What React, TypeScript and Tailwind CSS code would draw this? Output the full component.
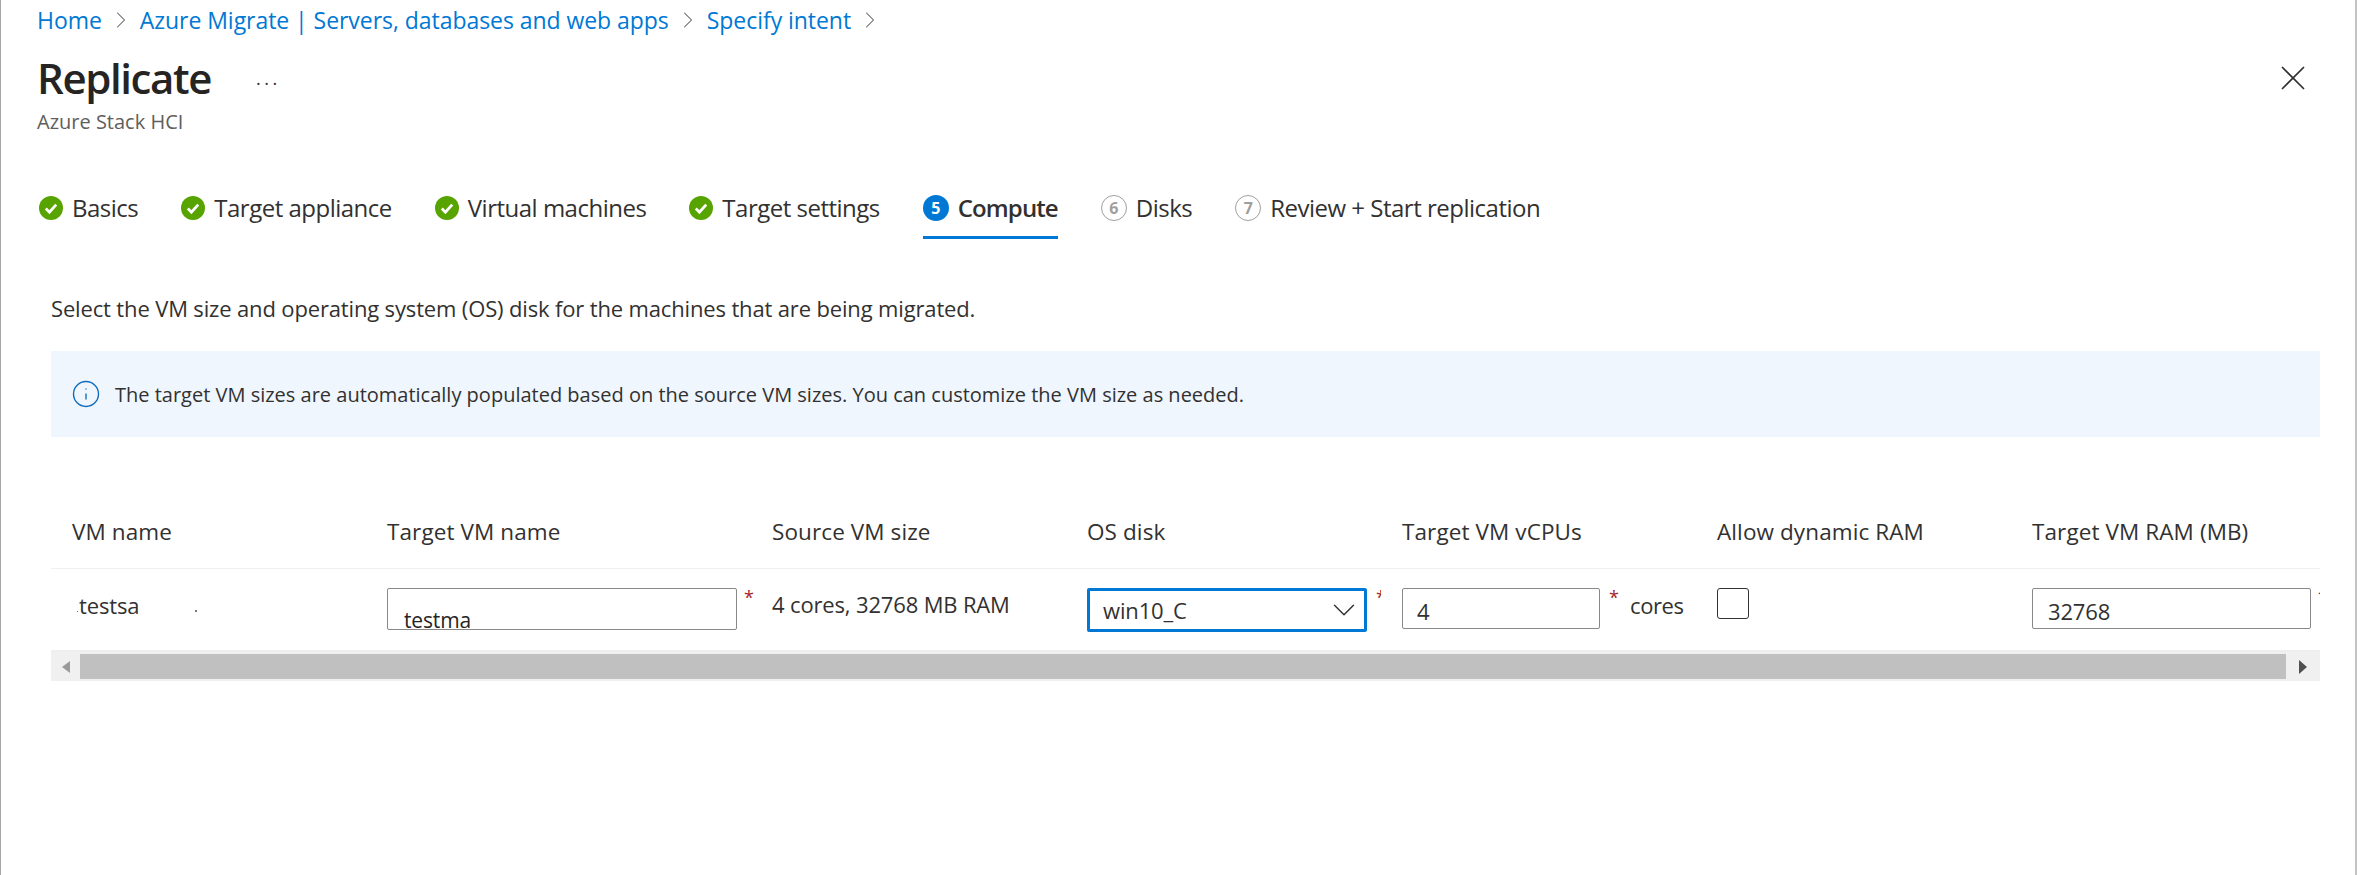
import { ChevronDown, ChevronRight, Info, X } from 'lucide-react';

type Step = {
  label: string;
  state: 'done' | 'active' | 'todo';
  num?: number;
};

const steps: Step[] = [
  { label: 'Basics', state: 'done' },
  { label: 'Target appliance', state: 'done' },
  { label: 'Virtual machines', state: 'done' },
  { label: 'Target settings', state: 'done' },
  { label: 'Compute', state: 'active', num: 5 },
  { label: 'Disks', state: 'todo', num: 6 },
  { label: 'Review + Start replication', state: 'todo', num: 7 },
];

const crumbs = ['Home', 'Azure Migrate | Servers, databases and web apps', 'Specify intent'];

const columns = ['VM name', 'Target VM name', 'Source VM size', 'OS disk', 'Target VM vCPUs', 'Allow dynamic RAM', 'Target VM RAM (MB)'];

function StepIcon({ step }: { step: Step }) {
  if (step.state === 'done') {
    return (
      <svg className="h-6 w-6 shrink-0" viewBox="0 0 24 24">
        <circle cx="12" cy="12" r="12" fill="#57a300" />
        <path d="M6.8 12.6l3.6 3.6 6.8-7.6" fill="none" stroke="#fff" strokeWidth="2.8" />
      </svg>
    );
  }

  if (step.state === 'active') {
    return (
      <span className="flex h-[26px] w-[26px] shrink-0 items-center justify-center rounded-full bg-[#0078d4] text-[16px] font-bold text-white">
        {step.num}
      </span>
    );
  }

  return (
    <span className="flex h-[26px] w-[26px] shrink-0 items-center justify-center rounded-full border border-[#a19f9d] text-[16px] font-bold text-[#a19f9d]">
      {step.num}
    </span>
  );
}

function Required() {
  return <span className="ml-[7px] w-[12px] text-[18px] leading-[18px] text-[#a4262c]">*</span>;
}

export default function App() {
  return (
    <div className="box-border h-[875px] w-[2357px] overflow-hidden border-r-2 border-l border-r-[#c4c4c4] border-l-[#a6a6a6] bg-white font-['Open_Sans',sans-serif] text-[#323130]">
      <nav className="flex h-[40px] items-center pl-[36px] text-[23px] tracking-[-0.05px] text-[#0078d4]">
        {crumbs.map((crumb) => (
          <span className="flex items-center" key={crumb}>
            <span>{crumb}</span>
            <ChevronRight className="mx-[5px] text-[#605e5c]" size={28} strokeWidth={0.9} />
          </span>
        ))}
      </nav>

      <div className="mt-[10px] flex h-[56px] items-center justify-between pl-[36px] pr-[41px]">
        <div className="flex items-center">
          <h1 className="text-[42px] font-semibold leading-[56px] tracking-[-1.4px] text-[#252423]">Replicate</h1>
          <span className="ml-[45px] text-[18px] leading-none tracking-[3.5px] text-[#323130]">...</span>
        </div>
        <X className="text-[#323130]" size={42} strokeWidth={1} />
      </div>

      <p className="mt-[2px] h-[28px] pl-[36px] text-[20px] leading-[28px] text-[#605e5c]">Azure Stack HCI</p>

      <div className="mt-[54px] flex items-start gap-[43px] pl-[38px]">
        {steps.map((step) => (
          <div
            className={`flex h-[49px] items-start gap-[9px] border-b-[3px] ${step.state === 'active' ? 'border-[#0078d4]' : 'border-transparent'}`}
            key={step.label}
          >
            <div className="flex h-[36px] items-center gap-[9px]">
              <StepIcon step={step} />
              <span className={`text-[24px] ${step.state === 'active' ? 'font-semibold tracking-[-0.9px]' : 'tracking-[-0.5px]'}`}>{step.label}</span>
            </div>
          </div>
        ))}
      </div>

      <div className="pl-[50px]">
        <p className="mt-[55px] h-[28px] text-[22px] leading-[28px] tracking-[-0.15px]">
          Select the VM size and operating system (OS) disk for the machines that are being migrated.
        </p>

        <div className="mt-[29px] flex h-[86px] w-[2269px] items-center gap-[14px] bg-[#eff6fe] pl-[20px]">
          <Info className="text-[#0f6cbd]" size={30} strokeWidth={1.1} />
          <span className="pt-[2px] text-[20px]">
            The target VM sizes are automatically populated based on the source VM sizes. You can customize the VM size as needed.
          </span>
        </div>

        <div className="mt-[59px] w-[2269px] overflow-hidden">
          <div className="grid h-[73px] grid-cols-[315px_385px_315px_315px_315px_315px_400px] items-center border-b border-[#f0f0f0] pl-[21px] pr-0">
            {columns.map((col) => (
              <span className="whitespace-nowrap text-[22.5px] font-medium tracking-[0.1px] text-[#323130]" key={col}>{col}</span>
            ))}
          </div>

          <div className="grid h-[83px] grid-cols-[315px_385px_315px_315px_315px_315px_400px] items-start border-b-2 border-[#eeeeee] pl-[21px] pt-[19px] text-[22px] tracking-[-0.15px]">
            <div className="flex h-[34px] items-center pl-[5px]">
              <span className="mr-px mt-[12px] h-px w-px bg-[#777777]" />
              <span>testsa</span>
              <span className="ml-[56px] mt-[12px] h-[2px] w-[2px] bg-[#777777]" />
            </div>

            <div className="flex items-start">
              <input
                className="box-border h-[42px] w-[350px] rounded-[2px] border border-[#8a8886] pl-[16px] pt-[21px] text-[21px] text-[#252423] outline-none"
                readOnly
                value="testma"
              />
              <Required />
            </div>

            <div className="flex h-[32px] items-center whitespace-nowrap">4 cores, 32768 MB RAM</div>

            <div className="flex items-start">
              <div className="box-border flex h-[44px] w-[280px] items-center justify-between rounded-[2px] border-[3px] border-[#0078d4] pl-[13px] pr-px">
                <span>win10_C</span>
                <ChevronDown className="text-[#323130]" size={38} strokeWidth={0.9} />
              </div>
              <span className="ml-[9px] w-[5px] overflow-hidden text-[18px] leading-[18px] text-[#a4262c]">*</span>
            </div>

            <div className="flex items-start">
              <input
                className="box-border h-[41px] w-[198px] rounded-[2px] border border-[#8a8886] pl-[14px] pt-[4px] outline-none"
                readOnly
                value="4"
              />
              <span className="ml-[9px] w-[12px] text-[18px] leading-[18px] text-[#a4262c]">*</span>
              <span className="ml-[9px] mt-[1px] leading-[32px] tracking-[-0.4px]">cores</span>
            </div>

            <div>
              <div className="box-border h-[31px] w-[32px] rounded-[3px] border border-[#323130]" />
            </div>

            <div className="flex items-start">
              <input
                className="box-border h-[41px] w-[279px] rounded-[2px] border border-[#8a8886] pl-[15px] pt-[4px] outline-none"
                readOnly
                value="32768"
              />
              <Required />
            </div>
          </div>

          <div className="flex h-[29px] items-center bg-[#f0f0f0]">
            <div className="flex w-[29px] justify-center">
              <span className="h-0 w-0 border-y-[6px] border-r-[8px] border-y-transparent border-r-[#9a9a9a]" />
            </div>
            <div className="h-[25px] flex-1 bg-[#c0c0c0]" />
            <div className="flex w-[34px] justify-center">
              <span className="h-0 w-0 border-y-[7px] border-l-[8px] border-y-transparent border-l-[#505050]" />
            </div>
          </div>
        </div>
      </div>
    </div>
  );
}
